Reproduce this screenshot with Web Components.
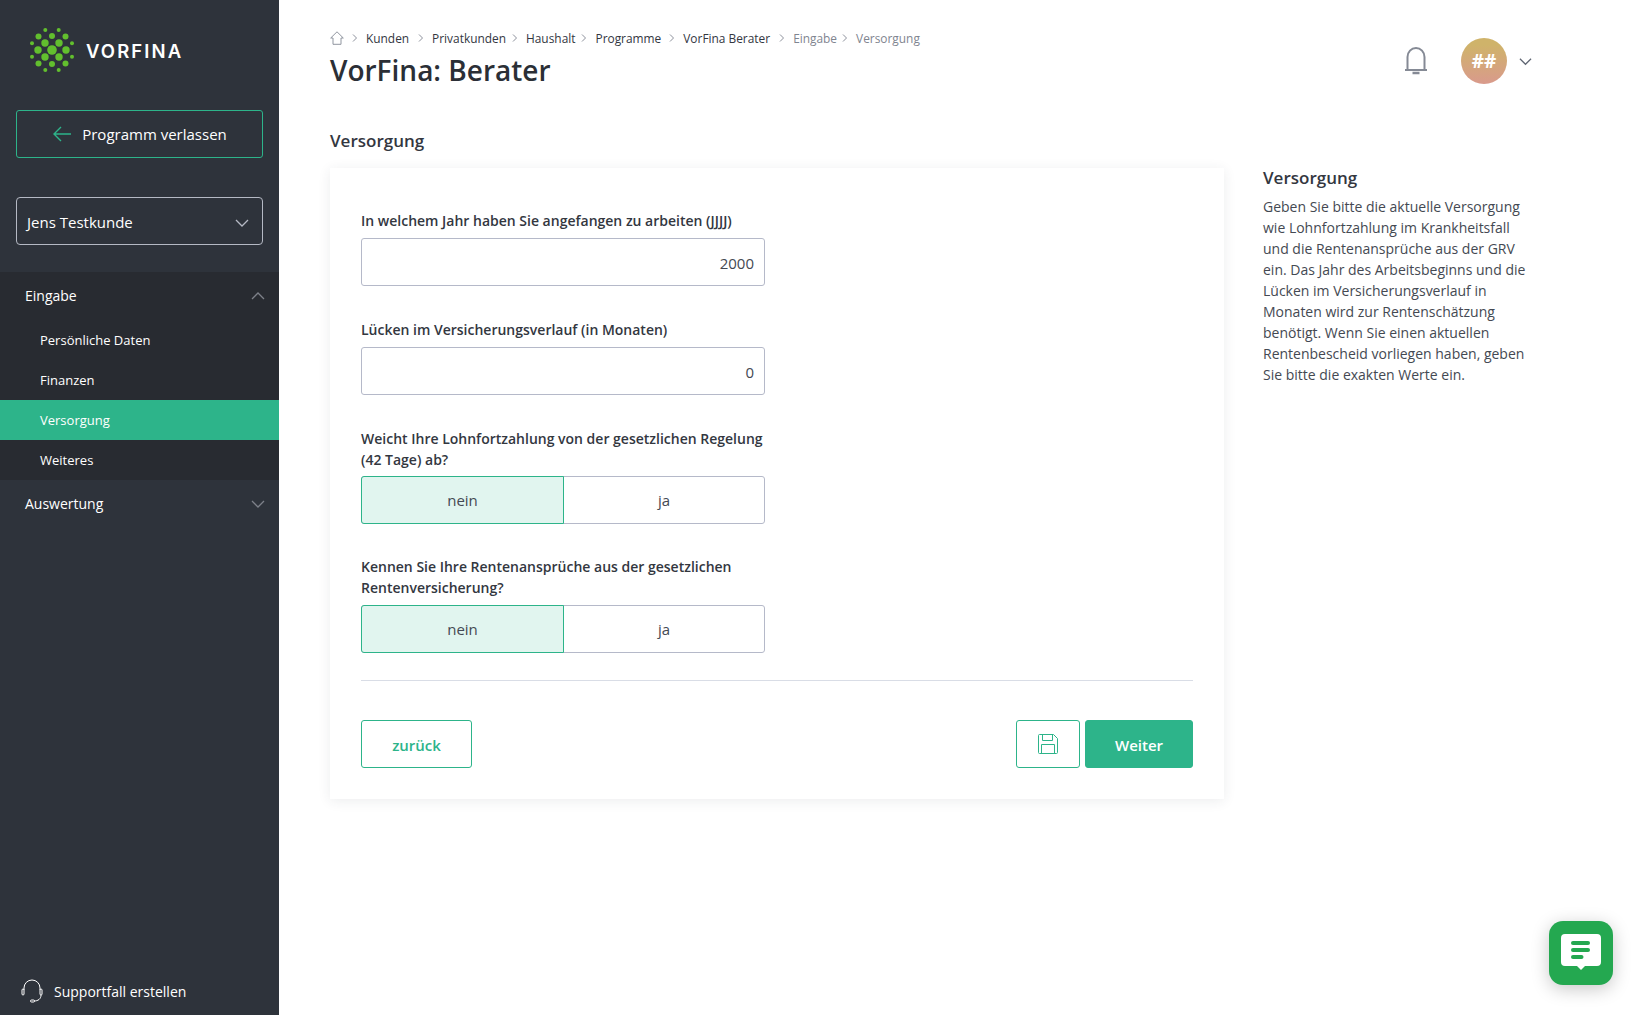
<!DOCTYPE html>
<html lang="de">
<head>
<meta charset="utf-8">
<title>VorFina: Berater</title>
<style>
    html, body { margin: 0; height: 100%; }
    body { font-family: "Open Sans", "Liberation Sans", sans-serif; color: #2b2f36; background: #fff; overflow: hidden; }
    .page { display: flex; height: 1015px; }
    .content { flex: 1; padding: 29px 0 0 51px; min-width: 0; }
    .columns { display: flex; align-items: flex-start; gap: 39px; }
</style>
</head>
<body>
<div class="page">
    <vf-sidebar>
        <vf-nav-group label="Eingabe" open>
            <vf-nav-item>Persönliche Daten</vf-nav-item>
            <vf-nav-item>Finanzen</vf-nav-item>
            <vf-nav-item active>Versorgung</vf-nav-item>
            <vf-nav-item>Weiteres</vf-nav-item>
        </vf-nav-group>
        <vf-nav-group label="Auswertung"></vf-nav-group>
    </vf-sidebar>
    <div class="content">
        <vf-header title="VorFina: Berater"></vf-header>
        <vf-section-title>Versorgung</vf-section-title>
        <div class="columns">
            <vf-card>
                <vf-field label="In welchem Jahr haben Sie angefangen zu arbeiten (JJJJ)"><vf-input value="2000"></vf-input></vf-field>
                <vf-field label="Lücken im Versicherungsverlauf (in Monaten)"><vf-input value="0"></vf-input></vf-field>
                <vf-field label="Weicht Ihre Lohnfortzahlung von der gesetzlichen Regelung (42 Tage) ab?"><vf-toggle style="margin: -1px 0"></vf-toggle></vf-field>
                <vf-field label="Kennen Sie Ihre Rentenansprüche aus der gesetzlichen Rentenversicherung?"><vf-toggle></vf-toggle></vf-field>
                <vf-form-actions></vf-form-actions>
            </vf-card>
            <vf-help heading="Versorgung">Geben Sie bitte die aktuelle Versorgung wie Lohnfortzahlung im Krankheitsfall und die Rentenansprüche aus der GRV ein. Das Jahr des Arbeitsbeginns und die Lücken im Versicherungsverlauf in Monaten wird zur Rentenschätzung benötigt. Wenn Sie einen aktuellen Rentenbescheid vorliegen haben, geben Sie bitte die exakten Werte ein.</vf-help>
        </div>
    </div>
</div>
<vf-chat></vf-chat>

<script>
    const chevron = (dir, color, size = 14) => `
        <svg width="${size}" height="${size}" viewBox="0 0 14 14" fill="none" stroke="${color}" stroke-width="1.3">
            <path d="${dir === 'up' ? 'M1 10L7 4L13 10' : 'M1 4L7 10L13 4'}"/>
        </svg>`;

    class VfSidebar extends HTMLElement {
        constructor() {
            super();
            this.attachShadow({ mode: "open" });
            // logo dots: centre, two rings and the small outer ones
            const dots = [[0,0,4.8]];
            [[-7,-7],[7,-7],[14,0],[7,7],[-7,7],[-14,0]].forEach(([x,y]) => dots.push([x,y,3.7]));
            [[-13.5,-13.5],[0,-14],[13.5,-13.5],[13.5,13.5],[0,14],[-13.5,13.5]].forEach(([x,y]) => dots.push([x,y,3]));
            [[-6.7,-20],[6.7,-20],[20,-6.7],[20,6.7],[-20,-6.7],[-20,6.7],[-6.7,20],[6.7,20]].forEach(([x,y]) => dots.push([x,y,2]));
            const circles = dots.map(([x,y,r]) => `<circle cx="${x}" cy="${y}" r="${r}"/>`).join("");
            this.shadowRoot.innerHTML = `
                <style>
                    :host { display: flex; flex-direction: column; flex: 0 0 279px; width: 279px; height: 1015px; background: #2e333b; color: #fff; font-size: 14px; }
                    .logo { display: flex; align-items: center; gap: 11px; padding: 27px 0 0 29px; height: 46px; }
                    .logo span { font-family: Inter, "Open Sans", sans-serif; font-weight: 600; font-size: 18.5px; letter-spacing: 2.1px; padding-top: 1px; }
                    .leave { display: flex; align-items: center; justify-content: center; gap: 11px; margin: 37px 16px 0; height: 46px; border: 1px solid #2db48a; border-radius: 3px; font-size: 15px; }
                    .leave span { padding-right: 1px; }
                    .select { display: flex; align-items: center; justify-content: space-between; margin: 39px 16px 0; height: 45px; padding: 1px 13px 0 10px; border: 1px solid #b5b9c4; border-radius: 4px; font-size: 15px; }
                    .select svg { margin-top: 3px; }
                    nav { margin-top: 27px; }
                    .support { display: flex; align-items: center; gap: 10px; margin-top: auto; padding: 0 0 12px 20px; font-size: 14px; }
                </style>
                <div class="logo">
                    <svg width="46" height="46" viewBox="-23 -23 46 46" fill="#62bf2e">${circles}</svg>
                    <span>VORFINA</span>
                </div>
                <div class="leave">
                    <svg width="20" height="16" viewBox="0 0 20 16" fill="none" stroke="#2db48a" stroke-width="1.4"><path d="M20 8H3M10 1L3 8L10 15"/></svg>
                    <span>Programm verlassen</span>
                </div>
                <div class="select"><span>Jens Testkunde</span>${chevron('down', '#b5b9c4')}</div>
                <nav><slot></slot></nav>
                <div class="support">
                    <svg width="24" height="24" viewBox="0 0 24 24" fill="none" stroke="#fff" stroke-width="1"><path d="M4 11V9a8 8 0 0 1 16 0v2"/><rect x="2" y="10" width="2" height="6" rx="1"/><rect x="20" y="10" width="2" height="6" rx="1"/><path d="M21 16c0 4-3 6-7 6"/><rect x="10.500" y="21" width="4" height="2" rx="1"/></svg>
                    <span>Supportfall erstellen</span>
                </div>
            `;
        }
    }

    class VfNavGroup extends HTMLElement {
        constructor() {
            super();
            this.attachShadow({ mode: "open" });
        }

        connectedCallback() {
            const open = this.hasAttribute("open");
            this.shadowRoot.innerHTML = `
                <style>
                    :host { display: block; background: ${open ? '#282b31' : 'transparent'}; }
                    .head { display: flex; align-items: center; justify-content: space-between; height: ${open ? 48 : 47}px; padding: 0 14px 0 25px; font-size: 14px; }
                    .head span { margin-top: ${open ? -1 : 0}px; }
                </style>
                <div class="head"><span>${this.getAttribute("label")}</span>${chevron(open ? 'up' : 'down', '#7d8189')}</div>
                <slot></slot>
            `;
        }
    }

    class VfNavItem extends HTMLElement {
        constructor() {
            super();
            this.attachShadow({ mode: "open" });
            this.shadowRoot.innerHTML = `
                <style>
                    :host { display: flex; align-items: center; height: 40px; padding-left: 40px; font-size: 13px; }
                    :host([active]) { background: #2db48a; }
                </style>
                <slot></slot>
            `;
        }
    }

    class VfHeader extends HTMLElement {
        constructor() {
            super();
            this.attachShadow({ mode: "open" });
        }

        connectedCallback() {
            const crumbs = [["Kunden", 0, 9], ["Privatkunden", 0, 6], ["Haushalt", 0, 6], ["Programme", 0, 8], ["VorFina Berater", 0, 9], ["Eingabe", 1, 5], ["Versorgung", 1, 0]];
            const sep = `<svg width="6" height="8" viewBox="0 0 6 8" fill="none" stroke="#7f8590" stroke-width="0.9"><path d="M1 0.5L4.500 4L1 7.500"/></svg>`;
            const trail = crumbs.map(([text, muted, gap]) =>
                `<span class="${muted ? 'muted' : ''}" style="margin-right:${gap}px">${text}</span>${gap ? sep : ''}`).join("");
            this.shadowRoot.innerHTML = `
                <style>
                    :host { display: flex; justify-content: space-between; width: 1202px; height: 69px; }
                    .crumbs { display: flex; align-items: center; height: 18px; font-size: 11.9px; color: #33373f; }
                    .crumbs svg { margin-right: 8px; flex: none; }
                    .muted { color: #7f8590; }
                    h1 { margin: 4px 0 0; font-size: 28px; line-height: 38px; font-weight: 600; color: #2b2f36; }
                    .user { display: flex; align-items: center; margin-top: 9px; height: 46px; }
                    .user .bell { margin-top: -1px; }
                    .user .avatar { display: flex; align-items: center; justify-content: center; width: 46px; height: 46px; margin: 0 12px 0 33px; border-radius: 50%; background: linear-gradient(#cfb36a 15%, #d99a8c 100%); color: #fff; font-weight: 700; font-size: 19px; }
                </style>
                <div>
                    <div class="crumbs">
                        <svg width="14" height="14" viewBox="0 0 14 14" fill="none" stroke="#858a95" stroke-width="0.9"><path d="M0.700 7L7 0.800L13.300 7H11V13.300H3V7Z"/></svg>${sep}${trail}
                    </div>
                    <h1>${this.getAttribute("title")}</h1>
                </div>
                <div class="user">
                    <svg class="bell" width="24" height="30" viewBox="0 0 24 30" fill="none" stroke="#858a95" stroke-width="2"><path d="M1 24H23M3.500 24V11a8.500 9 0 0 1 17 0V24"/><path d="M8.500 27H15.500" stroke-width="2.500"/></svg>
                    <div class="avatar">##</div>
                    ${chevron('down', '#5f6673', 13)}
                </div>
            `;
        }
    }

    class VfSectionTitle extends HTMLElement {
        constructor() {
            super();
            this.attachShadow({ mode: "open" });
            this.shadowRoot.innerHTML = `
                <style>
                    :host { display: block; margin-top: 30px; height: 40px; font-size: 17px; line-height: 26px; font-weight: 600; color: #33373f; }
                </style>
                <slot></slot>
            `;
        }
    }

    class VfCard extends HTMLElement {
        constructor() {
            super();
            this.attachShadow({ mode: "open" });
            this.shadowRoot.innerHTML = `
                <style>
                    :host { display: flex; flex-direction: column; gap: 33px; flex: 0 0 894px; box-sizing: border-box; padding: 42px 31px 31px; background: #fff; box-shadow: 0 2px 12px rgba(40, 50, 70, 0.09); }
                </style>
                <slot></slot>
            `;
        }
    }

    class VfField extends HTMLElement {
        constructor() {
            super();
            this.attachShadow({ mode: "open" });
        }

        connectedCallback() {
            this.shadowRoot.innerHTML = `
                <style>
                    :host { display: block; width: 404px; }
                    label { display: block; margin-bottom: 7px; font-size: 14px; line-height: 21px; font-weight: 600; color: #33373f; }
                </style>
                <label>${this.getAttribute("label")}</label>
                <slot></slot>
            `;
        }
    }

    class VfInput extends HTMLElement {
        constructor() {
            super();
            this.attachShadow({ mode: "open" });
        }

        connectedCallback() {
            this.shadowRoot.innerHTML = `
                <style>
                    :host { display: flex; align-items: center; justify-content: flex-end; box-sizing: border-box; height: 48px; padding: 2px 10px 0; border: 1px solid #b5b9c9; border-radius: 3px; font-size: 15px; color: #444952; }
                </style>
                <span>${this.getAttribute("value")}</span>
            `;
        }
    }

    class VfToggle extends HTMLElement {
        constructor() {
            super();
            this.attachShadow({ mode: "open" });
            this.shadowRoot.innerHTML = `
                <style>
                    :host { display: grid; grid-template-columns: 202px 1fr; height: 48px; box-sizing: border-box; border: 1px solid #b5b9c9; border-radius: 3px; font-size: 15px; color: #444952; }
                    div { display: flex; align-items: center; justify-content: center; }
                    .on { margin: -1px 0 -1px -1px; background: #e1f5ef; border: 1px solid #2db48a; border-radius: 3px 0 0 3px; }
                </style>
                <div class="on">nein</div>
                <div>ja</div>
            `;
        }
    }

    class VfFormActions extends HTMLElement {
        constructor() {
            super();
            this.attachShadow({ mode: "open" });
            this.shadowRoot.innerHTML = `
                <style>
                    :host { display: flex; align-items: center; gap: 5px; margin-top: -6px; padding-top: 39px; border-top: 1px solid #d9dde6; }
                    .btn { display: flex; align-items: center; justify-content: center; box-sizing: border-box; height: 48px; padding-top: 2px; border: 1px solid #2db48a; border-radius: 3px; font-size: 15px; font-weight: 600; color: #2db48a; }
                    .back { width: 111px; margin-right: auto; }
                    .save { width: 64px; padding-top: 0; }
                    .next { width: 108px; background: #2db48a; color: #fff; }
                </style>
                <div class="btn back">zurück</div>
                <div class="btn save">
                    <svg width="20" height="20" viewBox="0 0 20 20" fill="none" stroke="#2db48a" stroke-width="1"><path d="M1.500 0.500H15.500L19.500 4.500V18.500a1 1 0 0 1-1 1H1.500a1 1 0 0 1-1-1V1.500a1 1 0 0 1 1-1Z"/><path d="M4.500 0.500V6.500H14.500V0.500M3.500 19.500V10.500H16.500V19.500"/></svg>
                </div>
                <div class="btn next">Weiter</div>
            `;
        }
    }

    class VfHelp extends HTMLElement {
        constructor() {
            super();
            this.attachShadow({ mode: "open" });
        }

        connectedCallback() {
            this.shadowRoot.innerHTML = `
                <style>
                    :host { display: block; width: 265px; margin-top: -3px; font-size: 14px; line-height: 21px; color: #444952; }
                    h3 { margin: 0 0 5px; font-size: 17px; line-height: 26px; font-weight: 600; color: #33373f; }
                </style>
                <h3>${this.getAttribute("heading")}</h3>
                <slot></slot>
            `;
        }
    }

    // sits over the page, bottom right
    class VfChat extends HTMLElement {
        constructor() {
            super();
            this.attachShadow({ mode: "open" });
            this.shadowRoot.innerHTML = `
                <style>
                    :host { position: fixed; right: 24px; bottom: 30px; display: flex; align-items: center; justify-content: center; width: 64px; height: 64px; border-radius: 14px; background: #24a850; box-shadow: 0 4px 18px rgba(0, 0, 0, 0.22); }
                </style>
                <svg width="40" height="38" viewBox="0 0 40 38" fill="#fff">
                    <path d="M4 0H36a4 4 0 0 1 4 4V28a4 4 0 0 1-4 4H24L20 36L16 32H4a4 4 0 0 1-4-4V4a4 4 0 0 1 4-4Z"/>
                    <g fill="#24a850"><rect x="10" y="7" width="19" height="4" rx="2"/><rect x="10" y="14" width="19" height="4" rx="2"/><rect x="10" y="21" width="12.500" height="4" rx="2"/></g>
                </svg>
            `;
        }
    }

    customElements.define("vf-sidebar", VfSidebar);
    customElements.define("vf-nav-group", VfNavGroup);
    customElements.define("vf-nav-item", VfNavItem);
    customElements.define("vf-header", VfHeader);
    customElements.define("vf-section-title", VfSectionTitle);
    customElements.define("vf-card", VfCard);
    customElements.define("vf-field", VfField);
    customElements.define("vf-input", VfInput);
    customElements.define("vf-toggle", VfToggle);
    customElements.define("vf-form-actions", VfFormActions);
    customElements.define("vf-help", VfHelp);
    customElements.define("vf-chat", VfChat);
</script>
</body>
</html>
